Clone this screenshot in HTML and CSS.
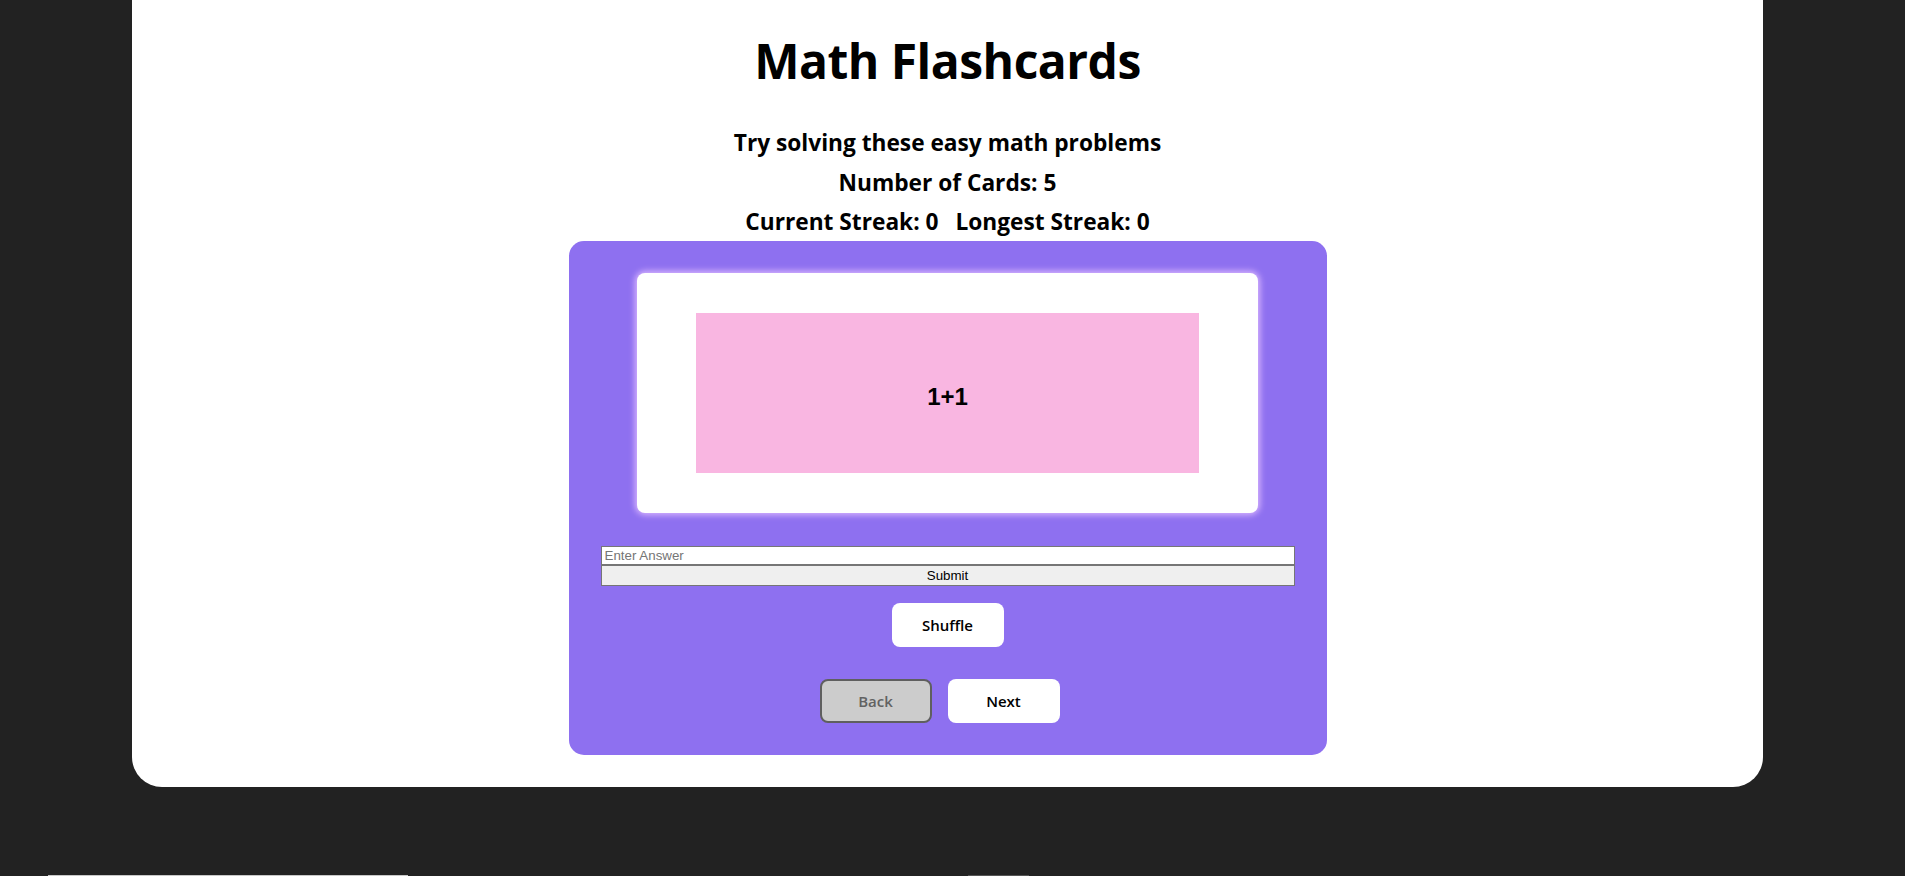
FILE: index.html
```html
<!DOCTYPE html>
<html lang="en">
<head>
<meta charset="utf-8">
<title>Math Flashcards</title>
<link rel="stylesheet" href="styles.css">
</head>
<body>
<div class="panel">
  <h1 class="title">Math Flashcards</h1>
  <div class="info">
    <p class="info-line">Try solving these easy math problems</p>
    <p class="info-line">Number of Cards: 5</p>
    <p class="info-line streaks"><span>Current Streak: 0</span><span>Longest Streak: 0</span></p>
  </div>
  <div class="deck">
    <div class="card">
      <div class="card-face">1+1</div>
    </div>
    <form class="answer-form">
      <input class="answer-input" type="text" placeholder="Enter Answer">
      <button class="submit-btn" type="button">Submit</button>
    </form>
    <div class="shuffle-row">
      <button class="btn" type="button">Shuffle</button>
    </div>
    <div class="nav-row">
      <button class="btn btn-nav btn-disabled" type="button">Back</button>
      <button class="btn btn-nav" type="button">Next</button>
    </div>
  </div>
</div>
<div class="below">
  <div class="below-light"></div>
  <div class="below-dark"></div>
</div>
</body>
</html>
```

FILE: styles.css
```css
html, body {
  margin: 0;
  padding: 0;
}

body {
  background: #222222;
  font-family: "Open Sans", "Noto Sans", sans-serif;
  color: #000;
}

.panel {
  width: 1631px;
  margin-left: 132px;
  background: #ffffff;
  border-radius: 0 0 30px 30px;
  padding: 0 0 32px;
  display: flex;
  flex-direction: column;
  align-items: center;
}

.title {
  margin: 32px 0 0;
  font-size: 48px;
  line-height: 58px;
  font-weight: 700;
  letter-spacing: -0.5px;
}

.info {
  margin-top: 33px;
  display: flex;
  flex-direction: column;
  align-items: center;
}

.info-line {
  margin: 0;
  font-size: 22.7px;
  line-height: 40px;
  font-weight: 700;
}

.streaks {
  display: flex;
  gap: 17px;
  line-height: 38px;
}

.deck {
  width: 758px;
  box-sizing: border-box;
  padding: 32px 32px 32px;
  background: #8e70f0;
  border-radius: 15px;
  display: flex;
  flex-direction: column;
  align-items: center;
}

.card {
  width: 621px;
  height: 240px;
  box-sizing: border-box;
  background: #ffffff;
  border-radius: 8px;
  box-shadow: 0 0 6px 2px rgba(222, 186, 255, 0.95);
  display: flex;
  align-items: center;
  justify-content: center;
}

.card-face {
  width: 503px;
  height: 160px;
  box-sizing: border-box;
  padding-top: 7px;
  background: #f9b6e1;
  display: flex;
  align-items: center;
  justify-content: center;
  font-family: "Liberation Sans", Arial, sans-serif;
  font-weight: 700;
  font-size: 24px;
}

.answer-form {
  margin: 33px 0 0;
  width: 100%;
  display: flex;
  flex-direction: column;
}

.answer-input {
  box-sizing: border-box;
  width: 100%;
  height: 20px;
  margin: 0;
  padding: 0 3px;
  border: 1px solid #767676;
  border-bottom-width: 2px;
  background: #ffffff;
  font-family: "Liberation Sans", Arial, sans-serif;
  font-size: 13.33px;
  color: #000;
}

.answer-input::placeholder {
  color: #757575;
}

.submit-btn {
  box-sizing: border-box;
  width: 100%;
  height: 20px;
  margin: 0;
  padding: 0;
  border: 1px solid #767676;
  border-top: none;
  border-radius: 0;
  background: #efefef;
  font-family: "Liberation Sans", Arial, sans-serif;
  font-size: 13.33px;
  color: #000;
}

.shuffle-row {
  margin-top: 17px;
  display: flex;
  justify-content: center;
}

.nav-row {
  margin-top: 32px;
  display: flex;
  justify-content: center;
}

.btn {
  width: 112px;
  height: 44px;
  box-sizing: border-box;
  border: none;
  border-radius: 8px;
  background: #ffffff;
  font-family: "Open Sans", "Noto Sans", sans-serif;
  font-size: 15px;
  font-weight: 600;
  color: #000;
  padding: 0;
}

.btn-nav {
  margin-right: 16px;
}

.btn-disabled {
  background: #cccccc;
  border: 2px solid #5f5f5f;
  color: #626262;
}

.below {
  margin-top: 88px;
  display: flex;
  padding-left: 48px;
  gap: 560px;
}

.below-light {
  width: 360px;
  height: 30px;
  background: #c8c8c8;
}

.below-dark {
  width: 61px;
  height: 30px;
  background: #555555;
}
```
